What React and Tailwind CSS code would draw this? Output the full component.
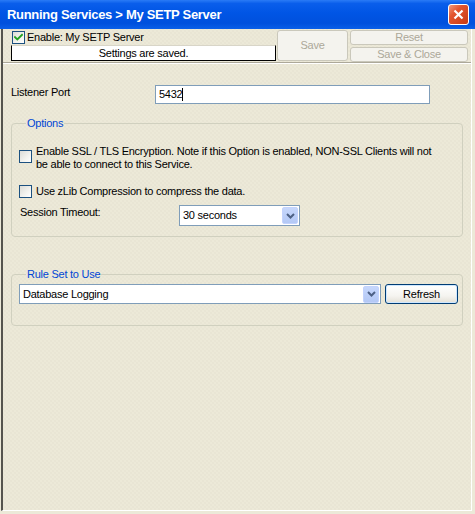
import React from "react";

const font = "font-['Liberation_Sans',Arial,sans-serif]";

function Check({ checked }) {
  return (
    <div className="w-[13px] h-[13px] shrink-0 border border-[#1C5180] bg-[linear-gradient(135deg,#DCDCD7_0%,#F3F3EF_60%,#FFFFFF_100%)] flex items-center justify-center">
      {checked && (
        <svg width="9" height="9" viewBox="0 0 9 9">
          <path d="M1 4.2 L3.3 6.5 L8 1.8" stroke="#21A121" strokeWidth="1.9" fill="none" strokeLinecap="square" />
        </svg>
      )}
    </div>
  );
}

function DropBtn() {
  return (
    <div className="w-[16px] h-[17px] shrink-0 rounded-[2px] border border-[#C3D3FD] bg-[linear-gradient(to_bottom,#C6D7FC,#B3C8F5)] flex items-center justify-center">
      <svg width="9" height="6" viewBox="0 0 9 6">
        <path d="M1 1 L4.5 4.5 L8 1" stroke="#4D6185" strokeWidth="2" fill="none" />
      </svg>
    </div>
  );
}

export default function App() {
  return (
    <div className={`w-[475px] h-[514px] bg-[#ECE9D8] overflow-hidden text-[11px] tracking-[-0.25px] text-black ${font}`}>
      {/* Title bar */}
      <div className="h-[29px] flex items-center justify-between pl-[7px] pr-[6px] bg-[linear-gradient(to_bottom,#2A7BF6_0%,#0A5EEB_12%,#0055E5_45%,#0050DD_80%,#0A5FE8_100%)]">
        <span className="text-white font-bold text-[13px] tracking-[-0.3px] leading-none">Running Services &gt; My SETP Server</span>
        <div className="w-[21px] h-[21px] rounded-[3px] border border-white bg-[linear-gradient(135deg,#F09A7E_0%,#E2552F_35%,#C83A14_100%)] flex items-center justify-center">
          <svg width="11" height="11" viewBox="0 0 11 11">
            <path d="M1.5 1.5 L9.5 9.5 M9.5 1.5 L1.5 9.5" stroke="white" strokeWidth="2.2" />
          </svg>
        </div>
      </div>

      {/* Frame */}
      <div className="ml-[1px] w-[471px] h-[482px] border-l-2 border-l-[#55544E] border-r border-r-white border-b border-b-white bg-[radial-gradient(circle,#E3E0CF_0.6px,transparent_0.8px),radial-gradient(circle,#E3E0CF_0.6px,transparent_0.8px)] bg-[length:4px_4px] bg-[position:0_0,2px_2px]">
        {/* Toolbar */}
        <div className="flex h-[33px]">
          <div className="ml-[8px] w-[265px] flex flex-col">
            <div className="flex items-center mt-[2px] h-[13px]">
              <div className="ml-[1px]"><Check checked /></div>
              <span className="ml-[2px] leading-[13px]">Enable: My SETP Server</span>
            </div>
            <div className="mt-[1px] h-[16px] bg-white border-l border-r border-b border-black border-t border-t-[#D8D5C8] flex items-center justify-center leading-none">
              Settings are saved.
            </div>
          </div>
          <div className="ml-[1px] mt-[1px] w-[71px] h-[31px] rounded-[3px] border border-[#CAC8BB] bg-[#F4F3EE] text-[#ACA899] flex items-center justify-center">
            Save
          </div>
          <div className="ml-[2px] mt-[1px] w-[118px] flex flex-col">
            <div className="h-[15px] rounded-[3px] border border-[#CAC8BB] bg-[#F4F3EE] text-[#ACA899] flex items-center justify-center leading-none">Reset</div>
            <div className="mt-[2px] h-[15px] rounded-[3px] border border-[#CAC8BB] bg-[#F4F3EE] text-[#ACA899] flex items-center justify-center leading-none">Save &amp; Close</div>
          </div>
        </div>
        <div className="h-[1px] bg-[#ACA899]" />
        <div className="h-[1px] bg-white" />

        {/* Listener Port */}
        <div className="flex items-start mt-[21px]">
          <span className="ml-[8px] mt-[1px] leading-[13px] w-[144px]">Listener Port</span>
          <div className="w-[275px] h-[19px] border border-[#7F9DB9] bg-white flex items-center pl-[3px]">
            <span className="leading-[13px]">5432</span>
            <span className="w-[1px] h-[13px] bg-black" />
          </div>
        </div>

        {/* Options */}
        <fieldset className="ml-[8px] mt-[13px] w-[452px] border border-[#D0D0BF] rounded-[4px] pl-[7px] pb-[10px]">
          <legend className="ml-[7px] px-[1px] text-[#0046D5] leading-[13px]">Options</legend>
          <div className="flex items-start mt-[15px]">
            <div className="mt-[5px]"><Check /></div>
            <span className="ml-[4px] leading-[13px] w-[402px]">
              Enable SSL / TLS Encryption. Note if this Option is enabled, NON-SSL Clients will not be able to connect to this Service.
            </span>
          </div>
          <div className="flex items-center mt-[14px] h-[13px]">
            <Check />
            <span className="ml-[4px] leading-[13px]">Use zLib Compression to compress the data.</span>
          </div>
          <div className="flex items-start mt-[7px]">
            <span className="ml-[1px] mt-[1px] leading-[13px] w-[159px]">Session Timeout:</span>
            <div className="w-[121px] h-[21px] border border-[#7F9DB9] bg-white flex items-center justify-between pl-[3px] pr-[1px]">
              <span className="leading-[13px]">30 seconds</span>
              <DropBtn />
            </div>
          </div>
        </fieldset>

        {/* Rule Set */}
        <fieldset className="ml-[8px] mt-[31px] w-[452px] border border-[#D0D0BF] rounded-[4px] pl-[7px] pb-[21px]">
          <legend className="ml-[7px] px-[1px] text-[#0046D5] leading-[13px]">Rule Set to Use</legend>
          <div className="flex items-center mt-[3px]">
            <div className="w-[362px] h-[20px] border border-[#7F9DB9] bg-white flex items-center justify-between pl-[3px] pr-[1px]">
              <span className="leading-[13px]">Database Logging</span>
              <DropBtn />
            </div>
            <div className="ml-[4px] w-[73px] h-[20px] rounded-[3px] border border-[#003C74] bg-[linear-gradient(to_bottom,#FFFFFF_0%,#F5F4F0_60%,#E3E0D6_100%)] shadow-[inset_0_0_0_1px_#CEE7FF] flex items-center justify-center leading-none">
              Refresh
            </div>
          </div>
        </fieldset>
      </div>
    </div>
  );
}
